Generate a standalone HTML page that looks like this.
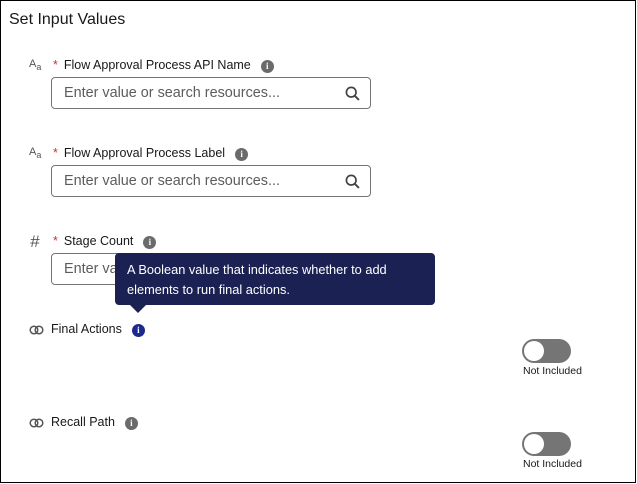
<!DOCTYPE html>
<html><head><style>
*{box-sizing:border-box;margin:0;padding:0}
body{width:637px;height:484px;background:#fff;font-family:"Liberation Sans",Arial,sans-serif;color:#181818;position:relative;overflow:hidden}
.frame{position:absolute;left:0;top:0;width:636px;height:483px;border:1px solid #000}
.abs{position:absolute}
h1{position:absolute;left:9px;top:11px;font-size:16px;font-weight:normal;color:#181818}
.lbl{position:absolute;font-size:12.5px;color:#181818;white-space:nowrap}
.star{color:#c23934;margin-right:6px}
.info{display:inline-block;width:13px;height:13px;border-radius:50%;background:#6b6b6b;color:#fff;font-size:9px;font-weight:bold;text-align:center;line-height:13px;vertical-align:0;margin-left:10px;font-family:"Liberation Serif",serif}
.inp{position:absolute;left:51px;width:320px;height:32px;border:1px solid #747474;border-radius:4px;font-size:14.4px;color:#5c5c5c;padding:7px 0 0 12px}
.mag{position:absolute;right:10px;top:8px}
.ic{position:absolute;font-size:11px;color:#555}
.tog{position:absolute;left:522px;width:49px;height:24px;border-radius:12px;background:#757575}
.tog::after{content:"";position:absolute;left:2px;top:2px;width:20px;height:20px;border-radius:50%;background:#fff}
.ni{position:absolute;left:523px;font-size:10.5px;color:#181818}
.tip{position:absolute;left:115px;top:253px;width:320px;height:52px;background:#1b2253;border-radius:4px;color:#fff;font-size:12.8px;line-height:20px;padding:7px 12px}
.tip::after{content:"";position:absolute;left:15px;bottom:-8px;border-left:8px solid transparent;border-right:8px solid transparent;border-top:8px solid #1b2253}
</style></head><body>
<div class="frame"></div>
<h1>Set Input Values</h1>

<div class="ic" style="left:29px;top:58px;font-size:11px">A<sub style="font-size:9px">a</sub></div>
<div class="lbl" style="left:53px;top:58px"><span class="star">*</span>Flow Approval Process API Name<span class="info">i</span></div>
<div class="inp" style="top:77px">Enter value or search resources...<svg class="mag" width="15" height="15" viewBox="0 0 14 14"><circle cx="5.8" cy="5.8" r="4.5" fill="none" stroke="#444" stroke-width="1.6"/><path d="M9 9l4 4" stroke="#444" stroke-width="1.8"/></svg></div>

<div class="ic" style="left:29px;top:146px">A<sub style="font-size:9px">a</sub></div>
<div class="lbl" style="left:53px;top:146px"><span class="star">*</span>Flow Approval Process Label<span class="info">i</span></div>
<div class="inp" style="top:165px">Enter value or search resources...<svg class="mag" width="15" height="15" viewBox="0 0 14 14"><circle cx="5.8" cy="5.8" r="4.5" fill="none" stroke="#444" stroke-width="1.6"/><path d="M9 9l4 4" stroke="#444" stroke-width="1.8"/></svg></div>

<div class="ic" style="left:30px;top:232px;font-size:17px;font-style:italic">#</div>
<div class="lbl" style="left:53px;top:234px"><span class="star">*</span>Stage Count<span class="info">i</span></div>
<div class="inp" style="top:253px">Enter value</div>

<div class="tip">A Boolean value that indicates whether to add<br>elements to run final actions.</div>

<svg class="abs" style="left:29px;top:325px" width="15" height="10" viewBox="0 0 15 10"><circle cx="5" cy="5" r="3.8" fill="none" stroke="#555" stroke-width="1.5"/><circle cx="10" cy="5" r="3.8" fill="none" stroke="#555" stroke-width="1.5"/></svg>
<div class="lbl" style="left:51px;top:322px">Final Actions<span class="info" style="background:#1b2a8c;margin-left:10px">i</span></div>
<div class="tog" style="top:339px"></div>
<div class="ni" style="top:365px">Not Included</div>

<svg class="abs" style="left:29px;top:418px" width="15" height="10" viewBox="0 0 15 10"><circle cx="5" cy="5" r="3.8" fill="none" stroke="#555" stroke-width="1.5"/><circle cx="10" cy="5" r="3.8" fill="none" stroke="#555" stroke-width="1.5"/></svg>
<div class="lbl" style="left:51px;top:415px">Recall Path<span class="info">i</span></div>
<div class="tog" style="top:432px"></div>
<div class="ni" style="top:458px">Not Included</div>
</body></html>
